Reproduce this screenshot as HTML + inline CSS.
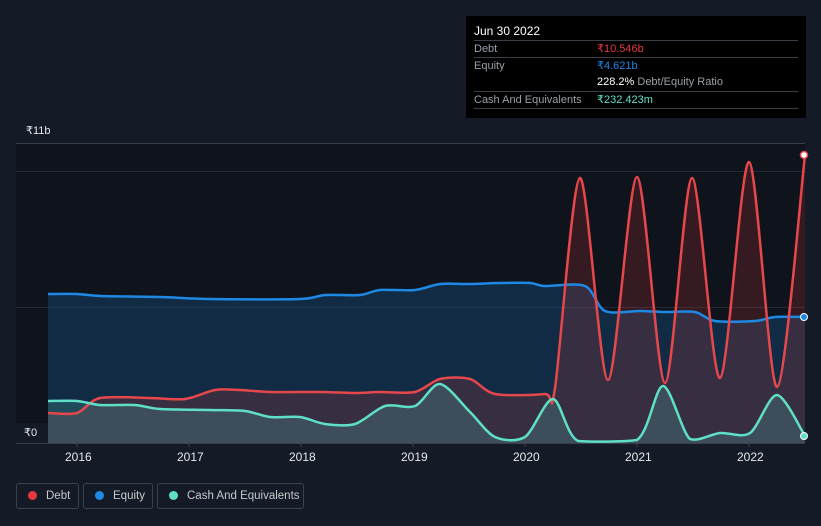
<!DOCTYPE html>
<html><head><meta charset="utf-8"><style>
body{margin:0;width:821px;height:526px;background:#151b26;font-family:"Liberation Sans",sans-serif;overflow:hidden;position:relative}
.tt{position:absolute;left:466px;top:16px;width:340px;height:102px;background:#000;color:#fff;font-size:11px}
.tt .r{position:absolute;left:8px;right:8px;border-top:1px solid #3a3f47;height:17px;line-height:17px;color:#9aa0a6}
.leg{position:absolute;top:483px;height:26px;border:1px solid #3c424c;border-radius:3px;color:#c6c9cd;font-size:11.5px;line-height:25px;box-sizing:border-box;white-space:nowrap}
.leg i{display:inline-block;width:9px;height:9px;border-radius:50%;margin:0 9px 0 11px;vertical-align:-1px}
.ax{position:absolute;top:450px;color:#e6e8ea;font-size:12px}
</style></head><body>
<svg width="821" height="526" style="position:absolute;left:0;top:0">
<rect x="16" y="143" width="789" height="300" fill="#0f141c"/>
<line x1="16" y1="143.5" x2="805" y2="143.5" stroke="#3a404a"/>
<line x1="16" y1="171.5" x2="805" y2="171.5" stroke="#242a33"/>
<line x1="16" y1="307.5" x2="805" y2="307.5" stroke="#242a33"/>
<g stroke="#3a404a"><line x1="77" y1="443" x2="77" y2="447"/><line x1="189" y1="443" x2="189" y2="447"/><line x1="301" y1="443" x2="301" y2="447"/><line x1="413" y1="443" x2="413" y2="447"/><line x1="525" y1="443" x2="525" y2="447"/><line x1="637" y1="443" x2="637" y2="447"/><line x1="749" y1="443" x2="749" y2="447"/></g>
<path id="ef" fill="#1e88e5" fill-opacity="0.2"/><path id="df" fill="#e53e3e" fill-opacity="0.18"/><path id="cf" fill="#5ee0c8" fill-opacity="0.18"/>
<line x1="16" y1="443.5" x2="805" y2="443.5" stroke="#3a404a"/>
<path id="el" fill="none" stroke="#1e88e5" stroke-width="2.5"/>
<path id="dl" fill="none" stroke="#e5474b" stroke-width="2.5"/>
<path id="cl" fill="none" stroke="#5ee0c8" stroke-width="2.5"/>
<circle cx="804" cy="155" r="3.5" fill="#fff" stroke="#e5474b" stroke-width="1.5"/>
<circle cx="804" cy="317" r="3.5" fill="#1e88e5" stroke="#fff" stroke-width="1"/>
<circle cx="804" cy="436" r="3.5" fill="#5ee0c8" stroke="#fff" stroke-width="1"/>
</svg>
<div style="position:absolute;left:26px;top:124px;color:#e6e8ea;font-size:11px">₹11b</div>
<div style="position:absolute;left:16px;top:423px;width:32px;height:20px;background:#151b26;color:#e6e8ea;font-size:11px;line-height:20px;padding-left:8px;box-sizing:border-box">₹0</div>
<div class="ax" style="left:65px">2016</div><div class="ax" style="left:177px">2017</div><div class="ax" style="left:289px">2018</div><div class="ax" style="left:401px">2019</div><div class="ax" style="left:513px">2020</div><div class="ax" style="left:625px">2021</div><div class="ax" style="left:737px">2022</div>
<div class="tt">
<div style="position:absolute;left:8px;top:8px;font-size:12px">Jun 30 2022</div>
<div class="r" style="top:24px">Debt<span style="position:absolute;left:123px;color:#e5393d">₹10.546b</span></div>
<div class="r" style="top:41px">Equity<span style="position:absolute;left:123px;color:#1e88e5">₹4.621b</span></div>
<div class="r" style="top:58px;border-top:none"><span style="position:absolute;left:123px"><b style="color:#fff;font-weight:normal">228.2%</b> Debt/Equity Ratio</span></div>
<div class="r" style="top:75px">Cash And Equivalents<span style="position:absolute;left:123px;color:#5ee0c8">₹232.423m</span></div>
<div class="r" style="top:92px;height:0"></div>
</div>
<div class="leg" style="left:16px;width:63px"><i style="background:#e5393d"></i>Debt</div>
<div class="leg" style="left:83px;width:70px"><i style="background:#1e88e5"></i>Equity</div>
<div class="leg" style="left:157px;width:147px"><i style="background:#5ee0c8"></i>Cash And Equivalents</div>
<script>
function cl(y){return Math.min(y,442);}
function cr(p){let d="M"+p[0][0]+","+p[0][1];for(let i=0;i<p.length-1;i++){const a=p[i-1]||p[i],b=p[i],c=p[i+1],e=p[i+2]||c;d+=" C"+(b[0]+(c[0]-a[0])/7)+","+cl(b[1]+(c[1]-a[1])/7)+" "+(c[0]-(e[0]-b[0])/7)+","+cl(c[1]-(e[1]-b[1])/7)+" "+c[0]+","+c[1];}return d;}
const E=[[48,294],[77,294],[100,296],[160,297],[210,299],[300,299],[325,295],[360,295],[380,290],[415,290],[440,284],[470,284],[500,283],[530,283],[545,286],[585,286],[605,311],[640,311],[665,312],[695,312],[715,321],[755,321],[775,317],[805,317]];
const D=[[48,413],[77,413],[100,398],[150,398],[185,399],[215,390],[240,390],[270,392],[320,392],[355,393],[380,392],[415,392],[440,379],[470,379],[495,394],[545,394],[555,388],[580,178],[608,380],[637,177],[665,383],[692,178],[720,378],[749,162],[777,387],[805,155]];
const C=[[48,401],[77,401],[100,405],[135,405],[160,409],[210,410],[245,411],[270,417],[300,417],[325,424],[355,424],[385,406],[415,406],[440,384],[470,412],[495,437],[525,437],[553,399],[578,441],[637,440],[663,386],[690,439],[720,433],[750,433],[777,395],[805,436]];
[["e",E],["d",D],["c",C]].forEach(([k,p])=>{const l=cr(p);document.getElementById(k+"l").setAttribute("d",l);document.getElementById(k+"f").setAttribute("d",l+" L805,443 L48,443 Z");});
</script>
</body></html>
